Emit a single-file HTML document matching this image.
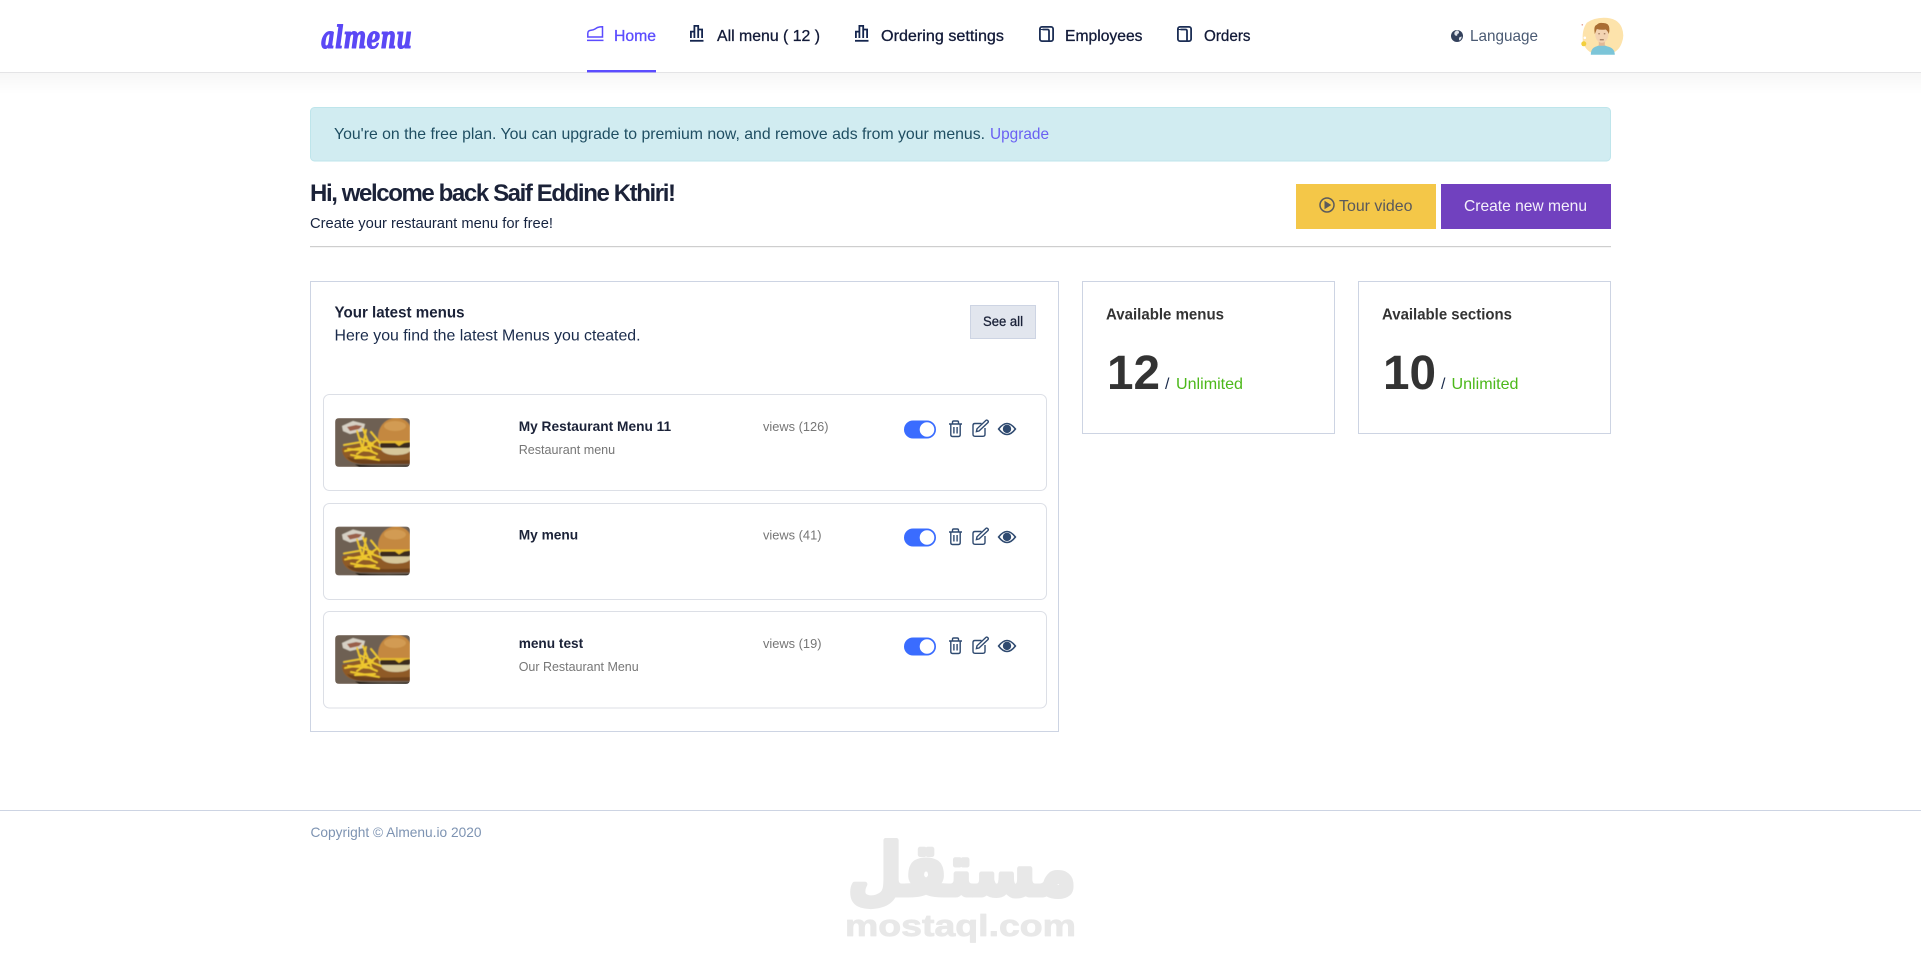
<!DOCTYPE html>
<html lang="en">
<head>
<meta charset="utf-8">
<title>Almenu</title>
<style>
html,body{margin:0;padding:0;background:#fff;width:1921px;height:963px;overflow:hidden}
svg{display:block;font-family:"Liberation Sans",sans-serif}
.m{stroke-width:.3px}
</style>
</head>
<body>
<svg xmlns="http://www.w3.org/2000/svg" width="1921" height="963" viewBox="0 0 1921 963">
<defs>
<linearGradient id="sh" x1="0" y1="0" x2="0" y2="1"><stop offset="0" stop-color="#f6f6f6"/><stop offset="1" stop-color="#fff"/></linearGradient>
<clipPath id="fc"><rect width="75" height="49" rx="4"/></clipPath>
<filter id="bl" x="-5%" y="-5%" width="110%" height="110%"><feGaussianBlur stdDeviation=".4"/></filter>
<g id="food">
<g clip-path="url(#fc)"><g filter="url(#bl)">
<rect width="75" height="49" fill="#6e6152"/>
<path d="M7 8l11-5 12 3-2 7-13 3-7-3z" fill="#d6d0c4"/>
<path d="M12 9l9-2 6 1-3 3-9 2z" fill="#9a5f48"/>
<path d="M7 30Q7 46 30 46H75V22Q40 20 7 30z" fill="#8f5a25"/>
<path d="M12 39Q30 44 75 42V46H28Q16 45 12 39z" fill="#6d431b"/>
<path d="M20 46.500Q40 48.500 75 47.500V49H24z" fill="#1e140c"/>
<path d="M44 27Q46 37 60 37 72 37 75 33V26H44z" fill="#d6c79a"/>
<rect x="45" y="24" width="30" height="6" rx="2" fill="#3a2a1c"/>
<path d="M44 21h31v3l-6 1-5 3-4-3H46z" fill="#e5b92f"/>
<path d="M43 20C43 7 52 0 61 0 68 0 75 4 75 10V23H46Q43 23 43 20z" fill="#c4883f"/>
<ellipse cx="60" cy="8" rx="11" ry="5" fill="#d29b52"/>
<g stroke="#eec72e" stroke-width="1.900" stroke-linecap="round" fill="none">
<path d="M9 27l17-3M10 33l26-5M22 13l6 19M28 11l8 20M31 12l-4 21M16 37l28 5M20 40l20-1M36 14l9 11M42 22l-20 14M13 31l24 2M33 26l13 5M24 20l14 6M28 30l14 6"/>
</g>
</g></g>
</g>
<g id="actions" fill="none" stroke="#2f4a70" stroke-width="1.400">
<rect x="904" y="421" width="32" height="18" rx="9" fill="#3a6cff" stroke="none"/>
<circle cx="927" cy="430" r="7.300" fill="#fff" stroke="none"/>
<path d="M949 424.500h13M952.500 424.500v-1.800q0-1.200 1.200-1.200h3.600q1.200 0 1.200 1.200v1.800M950.800 424.500v10.800q0 1.700 1.700 1.700h6q1.700 0 1.700-1.700V424.500M953.900 427.500v6.500M957.100 427.500v6.500"/>
<path d="M985 428.500v6.300q0 2-2 2h-8q-2 0-2-2v-8.800q0-2 2-2h6.500"/>
<path d="M979 431.500l-2.600.6.6-2.800 8.800-8.300q1-.9 2 .1t.1 2z"/>
<path d="M998.600 429.500q8.400-11 16.800 0-8.400 11-16.800 0z" stroke-width="1.600"/>
<circle cx="1007" cy="429.400" r="4.200" fill="#2f4a70" stroke="none"/>
</g>
<g id="bars" fill="none" stroke-width="1.800">
<path d="M.9 13V6.600h3.500V13M4.400 13V.9h3.800V13M8.200 13V4.500h3.900V13"/>
<path d="M0 15.800h13.500"/>
</g>
<g id="pages" fill="none" stroke-width="1.800">
<rect x=".9" y=".9" width="13.200" height="14.200" rx="2"/>
<path d="M3.500 3.500h5q1.500 0 1.500 1.500V15"/>
<path d="M.9 3.500h2.600" stroke-width="1"/>
</g>
</defs>

<!-- page shadow -->
<rect y="72" width="1921" height="22" fill="url(#sh)"/>

<!-- header -->
<rect width="1921" height="72" fill="#fff"/>
<rect y="72" width="1921" height="1" fill="#e4e4e6"/>
<text x="321" y="48" font-family="'DejaVu Serif',serif" font-style="italic" font-weight="700" font-size="31" fill="#5b48f5" stroke="#5b48f5" stroke-width="1.100" stroke-linejoin="round" textLength="91" lengthAdjust="spacingAndGlyphs">almenu</text>

<g transform="translate(587 26)" fill="none" stroke="#5b4cff" stroke-width="1.500">
<path d="M.8 11V7.200Q.8 4.500 4 4.200 6.500 4 8 3L10.500 1.500Q13 .8 15.500 .8V11z"/>
<path d="M0 14.400h16.500"/>
</g>
<text x="614" y="41" font-size="16" fill="#5b4cff" stroke="#5b4cff" class="m" textLength="42" lengthAdjust="spacingAndGlyphs">Home</text>
<rect x="587" y="70" width="69" height="2.400" fill="#5b4cff"/>

<use href="#bars" x="690" y="25" stroke="#14254e"/>
<text x="717" y="41" font-size="16" fill="#121a38" stroke="#121a38" class="m" textLength="103" lengthAdjust="spacingAndGlyphs">All menu ( 12 )</text>
<use href="#bars" x="855" y="25" stroke="#14254e"/>
<text x="881" y="41" font-size="16" fill="#121a38" stroke="#121a38" class="m" textLength="123" lengthAdjust="spacingAndGlyphs">Ordering settings</text>
<use href="#pages" x="1039" y="26" stroke="#1c2e55"/>
<text x="1065" y="41" font-size="16" fill="#121a38" stroke="#121a38" class="m" textLength="77.500" lengthAdjust="spacingAndGlyphs">Employees</text>
<use href="#pages" x="1177" y="26" stroke="#1c2e55"/>
<text x="1204" y="41" font-size="16" fill="#121a38" stroke="#121a38" class="m" textLength="46.500" lengthAdjust="spacingAndGlyphs">Orders</text>

<circle cx="1457" cy="36" r="6" fill="#33415c"/>
<path d="M1457 30.200q2.800.8 1.800 3.200-1.800.3-1.600 2.200-2.400.6-2.800-1.600-.6-2.200 2.600-3.800zM1461.800 36.500q-.5 3-2.400 4-1-2 .2-3.400z" fill="#dfe3ea"/>
<text x="1470" y="41" font-size="16" fill="#4a5a73" textLength="68" lengthAdjust="spacingAndGlyphs">Language</text>

<!-- avatar -->
<g transform="translate(.8 .8)">
<path d="M1586 22q7-5 17-5 14 0 18 10 3 8 0 15-3 9-12 11h-16q-9-3-11-13-1-11 4-18z" fill="#fde3ab"/>
<path d="M1590 54q0-7 6-8.500l5-2 5 2q8 1.500 8 8.500z" fill="#7cc5d8"/>
<rect x="1598" y="38" width="6" height="7" fill="#e3b997"/>
<ellipse cx="1601" cy="33.500" rx="6.600" ry="8.500" fill="#f3d3b2"/>
<path d="M1594 33q-1.500-8 2-9 2-2.500 6-1.800 6-.3 6.500 5 .4 3-.5 6-1-3-3-4.500-5 .8-9-.5-1 2.500-2 5.300z" fill="#a96d33"/>
<path d="M1597.500 33h1.500M1603 33h1.500M1599 39h4" stroke="#7a5238" stroke-width=".8"/>
<circle cx="1583" cy="43" r="2.500" fill="#f3cf3d"/>
<circle cx="1584" cy="37" r="1.300" fill="#fff"/>
<circle cx="1581.500" cy="24" r=".8" fill="#e29a8a"/>
</g>

<!-- alert -->
<rect x="310.500" y="107.500" width="1300" height="53.500" rx="4" fill="#d1ecf1" stroke="#bee5eb"/>
<text x="334" y="139" font-size="16" fill="#1f4e62" textLength="651" lengthAdjust="spacingAndGlyphs">You're on the free plan. You can upgrade to premium now, and remove ads from your menus.</text>
<text x="990" y="139" font-size="16" fill="#6a60f2" textLength="59" lengthAdjust="spacingAndGlyphs">Upgrade</text>

<!-- page title -->
<text x="310" y="201" font-size="24" font-weight="700" fill="#1b2238" textLength="366" lengthAdjust="spacing">Hi, welcome back Saif Eddine Kthiri!</text>
<text x="310" y="228" font-size="15" fill="#16233f" textLength="243" lengthAdjust="spacingAndGlyphs">Create your restaurant menu for free!</text>

<rect x="1296" y="184" width="140" height="45" fill="#f4c748"/>
<circle cx="1327" cy="205" r="7" fill="none" stroke="#5a5a5c" stroke-width="1.500"/>
<path d="M1324.500 200.800l6.800 4.200-6.800 4.200z" fill="#5a5a5c"/>
<text x="1339" y="211" font-size="16" fill="#59595c" textLength="73.500" lengthAdjust="spacingAndGlyphs">Tour video</text>
<rect x="1441" y="184" width="170" height="45" fill="#7141bf"/>
<text x="1464" y="211" font-size="16" fill="#f4f0fb" textLength="123" lengthAdjust="spacingAndGlyphs">Create new menu</text>
<rect x="310" y="246" width="1301" height="1.200" fill="#cecece"/>

<!-- latest menus card -->
<rect x="310.500" y="281.500" width="748" height="450" fill="#fff" stroke="#cdd4e3"/>
<text x="334.500" y="317.500" font-size="16" font-weight="700" fill="#1b2238" textLength="130" lengthAdjust="spacingAndGlyphs">Your latest menus</text>
<text x="334.500" y="340.500" font-size="16" fill="#1a2b4b" textLength="306" lengthAdjust="spacingAndGlyphs">Here you find the latest Menus you cteated.</text>
<rect x="970.500" y="305.500" width="65" height="33" fill="#e2e6ee" stroke="#cdd4e3"/>
<text x="983" y="326" font-size="14" fill="#1b2238" stroke="#1b2238" class="m" textLength="40" lengthAdjust="spacingAndGlyphs">See all</text>

<!-- row 1 -->
<rect x="323.500" y="394.500" width="723" height="96" rx="6" fill="#fff" stroke="#dcdfe6"/>
<use href="#food" x="335" y="418"/>
<text x="518.700" y="431" font-size="14" font-weight="700" fill="#1b2238" textLength="152.500" lengthAdjust="spacingAndGlyphs">My Restaurant Menu 11</text>
<text x="518.700" y="454" font-size="13" fill="#767676" textLength="96.500" lengthAdjust="spacingAndGlyphs">Restaurant menu</text>
<text x="763" y="431" font-size="13" fill="#767676" textLength="65.500" lengthAdjust="spacingAndGlyphs">views (126)</text>
<use href="#actions" y="-.5"/>

<!-- row 2 -->
<rect x="323.500" y="503.500" width="723" height="96" rx="6" fill="#fff" stroke="#dcdfe6"/>
<use href="#food" x="335" y="526.500"/>
<text x="518.700" y="539.500" font-size="14" font-weight="700" fill="#1b2238" textLength="59.500" lengthAdjust="spacingAndGlyphs">My menu</text>
<text x="763" y="539.500" font-size="13" fill="#767676" textLength="58.500" lengthAdjust="spacingAndGlyphs">views (41)</text>
<use href="#actions" y="107.500"/>

<!-- row 3 -->
<rect x="323.500" y="611.500" width="723" height="96.500" rx="6" fill="#fff" stroke="#dcdfe6"/>
<use href="#food" x="335" y="635"/>
<text x="518.700" y="648" font-size="14" font-weight="700" fill="#1b2238" textLength="64.500" lengthAdjust="spacingAndGlyphs">menu test</text>
<text x="518.700" y="671" font-size="13" fill="#767676" textLength="120" lengthAdjust="spacingAndGlyphs">Our Restaurant Menu</text>
<text x="763" y="648" font-size="13" fill="#767676" textLength="58.500" lengthAdjust="spacingAndGlyphs">views (19)</text>
<use href="#actions" y="216.500"/>

<!-- stats -->
<rect x="1082.500" y="281.500" width="252" height="152" fill="#fff" stroke="#cdd4e3"/>
<text x="1106" y="319.500" font-size="16" font-weight="700" fill="#333" textLength="118" lengthAdjust="spacingAndGlyphs">Available menus</text>
<text x="1107" y="389" font-size="48" font-weight="700" fill="#333" textLength="53" lengthAdjust="spacingAndGlyphs">12</text>
<text x="1165" y="389" font-size="16" fill="#1a2b4b">/</text>
<text x="1176" y="389" font-size="16" fill="#4cb81a" textLength="67" lengthAdjust="spacingAndGlyphs">Unlimited</text>

<rect x="1358.500" y="281.500" width="252" height="152" fill="#fff" stroke="#cdd4e3"/>
<text x="1382" y="319.500" font-size="16" font-weight="700" fill="#333" textLength="130" lengthAdjust="spacingAndGlyphs">Available sections</text>
<text x="1383" y="389" font-size="48" font-weight="700" fill="#333" textLength="53" lengthAdjust="spacingAndGlyphs">10</text>
<text x="1441" y="389" font-size="16" fill="#1a2b4b">/</text>
<text x="1451.500" y="389" font-size="16" fill="#4cb81a" textLength="67" lengthAdjust="spacingAndGlyphs">Unlimited</text>

<!-- footer -->
<rect y="810" width="1921" height="1" fill="#cdd4e3"/>
<text x="310.500" y="837" font-size="14" fill="#7d93b2" textLength="171" lengthAdjust="spacingAndGlyphs">Copyright © Almenu.io 2020</text>

<!-- watermark -->
<text x="1076" y="895" font-family="'DejaVu Sans',sans-serif" font-weight="700" font-size="72" fill="#e8e8e8" stroke="#e8e8e8" stroke-width="5" stroke-linejoin="round" textLength="228" lengthAdjust="spacingAndGlyphs" style="direction:rtl" text-anchor="start">مستقل</text>
<text x="845" y="936" font-size="31" font-weight="700" fill="#e8e8e8" stroke="#e8e8e8" stroke-width=".8" stroke-linejoin="round" textLength="231" lengthAdjust="spacingAndGlyphs">mostaql.com</text>
</svg>
</body>
</html>
